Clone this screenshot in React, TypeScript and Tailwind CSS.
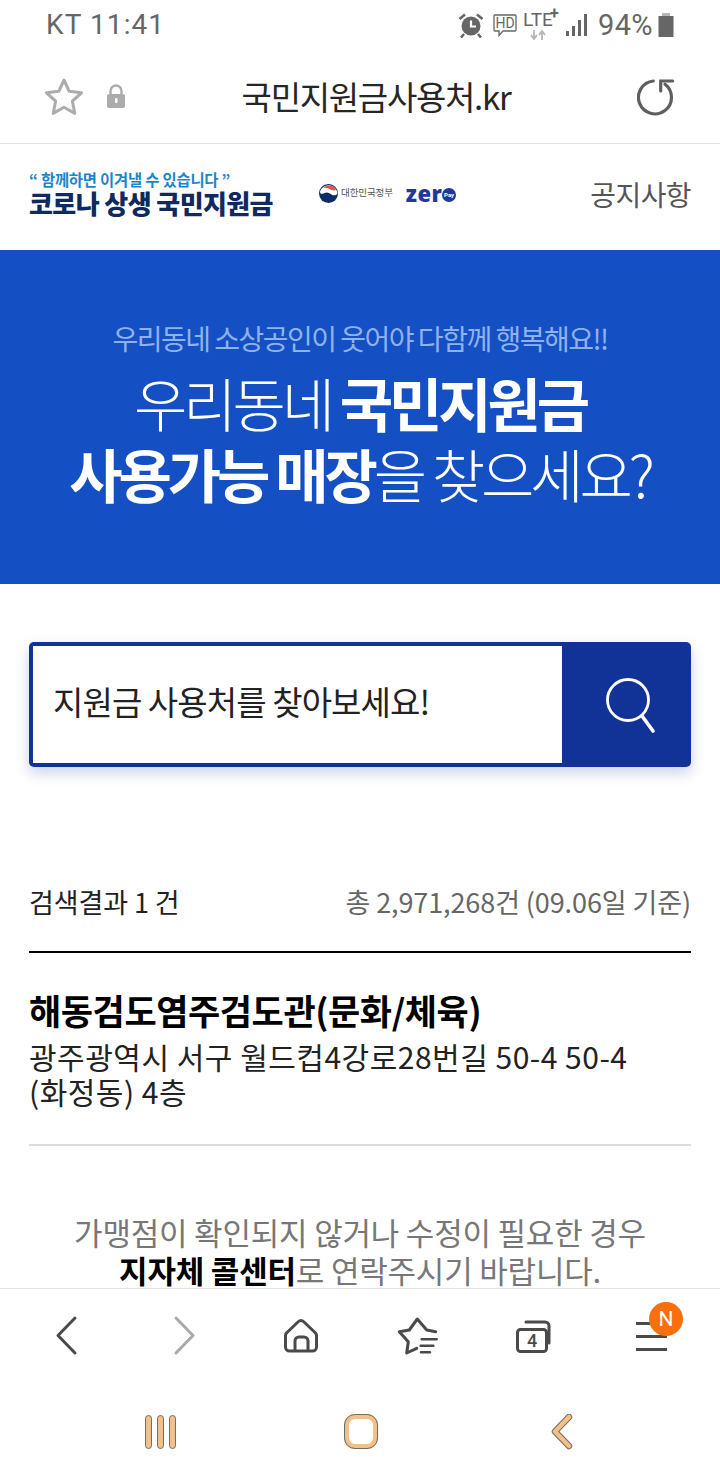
const font = { fontFamily: '"Noto Sans CJK KR", "Noto Sans", sans-serif' }
const roboto = { fontFamily: 'Roboto, sans-serif' }

function StatusBar() {
  return (
    <div className="h-[50px] flex items-center justify-between pl-[46px] pr-[45px] text-[#666666]">
      <span className="text-[28px] leading-none tracking-[1.1px]" style={roboto}>KT 11:41</span>
      <div className="flex items-center">
        <svg width="26" height="26" viewBox="0 0 26 26" className="mr-[8px]">
          <circle cx="13" cy="14" r="9.500" fill="#666666" />
          <path d="M13 8.500v6h5" stroke="#fff" strokeWidth="2.200" fill="none" />
          <path d="M1.500 7l5.500-4.500M24.500 7L19 2.500M6 22l-3 3.500M20 22l3 3.500" stroke="#666666" strokeWidth="2.600" fill="none" />
        </svg>
        <svg width="26" height="26" viewBox="0 0 26 26" className="mr-[4px]">
          <path d="M3 3h20a1 1 0 0 1 1 1v14a1 1 0 0 1-1 1H11l-4 4.500V19H3a1 1 0 0 1-1-1V4a1 1 0 0 1 1-1z" fill="none" stroke="#666666" strokeWidth="1.300" />
          <text x="13" y="16" textAnchor="middle" fontSize="14" fill="#666666" style={roboto}>HD</text>
        </svg>
        <div className="relative w-[40px] h-[30px] mr-[2px]">
          <span className="absolute left-[1px] top-[0px] text-[19px] leading-none" style={roboto}>LTE</span>
          <span className="absolute left-[28px] top-[-4px] text-[16px] leading-none font-bold" style={roboto}>+</span>
          <svg width="20" height="12" viewBox="0 0 20 12" className="absolute left-[7px] top-[19px]">
            <path d="M5 1v8M2 6l3 4 3-4" stroke="#b5b5b5" strokeWidth="1.800" fill="none" />
            <path d="M13 11V3M10 6l3-4 3 4" stroke="#b5b5b5" strokeWidth="1.800" fill="none" />
          </svg>
        </div>
        <svg width="24" height="24" viewBox="0 0 24 24" className="mr-[10px]">
          <path d="M2 18h3v5H2zM8 13h3v10H8zM14 7h3v16h-3zM20 1h3v22h-3z" fill="#666666" />
        </svg>
        <span className="text-[29px] leading-none tracking-[0.4px]" style={roboto}>94%</span>
        <svg width="18" height="26" viewBox="0 0 18 26" className="ml-[4px]">
          <path d="M5 1h8v3H5z" fill="#b8b8b8" />
          <path d="M1.500 4h15v21h-15z" fill="#666666" />
        </svg>
      </div>
    </div>
  )
}

function AddressBar() {
  return (
    <div className="h-[94px] flex items-center border-b border-[#e2e2e2] pl-[44px] pr-[45px]">
      <svg width="40" height="40" viewBox="0 0 40 40" className="shrink-0">
        <path d="M20 3l5.200 11.300 12.300 1.500-9.100 8.400 2.400 12.200L20 30.300 9.200 36.400l2.400-12.200-9.100-8.400 12.300-1.500z" fill="none" stroke="#acacac" strokeWidth="3" strokeLinejoin="round" />
      </svg>
      <svg width="22" height="28" viewBox="0 0 22 28" className="ml-[21px] shrink-0">
        <path d="M5.500 12V8a5.500 5.500 0 0 1 11 0v4" fill="none" stroke="#acacac" strokeWidth="2.400" />
        <rect x="2" y="11" width="18" height="14" rx="2" fill="#acacac" />
        <rect x="10" y="15" width="2.500" height="5" rx="1" fill="#fff" />
      </svg>
      <div className="flex-1 text-center text-[33px] leading-none tracking-[-1.3px] text-[#262626] pr-[12px]">국민지원금사용처.kr</div>
      <svg width="38" height="38" viewBox="0 0 38 38" className="shrink-0">
        <path d="M16.300 3A16.500 16.500 0 1 0 28 6.300" fill="none" stroke="#5f5f5f" strokeWidth="3.200" strokeLinecap="round" />
        <path d="M23.700 13V3h12" fill="none" stroke="#5f5f5f" strokeWidth="3.200" strokeLinecap="round" />
      </svg>
    </div>
  )
}

function SiteHeader() {
  return (
    <div className="h-[106px] flex items-center pl-[29px] pr-[29px]">
      <div className="w-[246px] shrink-0 -mt-[6px]">
        <div className="text-[15.4px] leading-[18px] font-bold text-[#1a86c9] whitespace-nowrap tracking-[-0.2px]">“ 함께하면 이겨낼 수 있습니다 ”</div>
        <div className="text-[26px] leading-[30px] font-black text-[#0f2a5f] tracking-[-0.6px] whitespace-nowrap">코로나 상생 국민지원금</div>
      </div>
      <div className="flex items-center ml-[44px] -mt-[8px]">
        <svg width="19" height="19" viewBox="0 0 19 19">
          <circle cx="9.500" cy="9.500" r="9.500" fill="#0b2a68" />
          <path d="M1 7.500A9 9 0 0 1 18.500 9c-.5 2.500-4 3-6 1.500s-4-3-7-1.500-4.500 1-4.500-1.500z" fill="#fff" />
          <path d="M4 4a8 8 0 0 1 13 2c-2 1-5 0-6.500-1S6 3.500 4 4z" fill="#d9534f" />
        </svg>
        <span className="text-[9.500px] leading-none text-[#555555] ml-[3px] tracking-[-0.1px] whitespace-nowrap">대한민국정부</span>
        <span className="text-[22px] leading-none font-black text-[#23399a] ml-[13px] tracking-[0.4px]" style={{ fontFamily: '"Open Sans", sans-serif' }}>zer</span>
        <span className="w-[14px] h-[14px] rounded-full bg-[#23399a] text-white text-[6px] leading-[14px] text-center font-bold mt-[3px] ml-[0px]" style={roboto}>Pay</span>
      </div>
      <div className="ml-auto text-[28px] leading-none tracking-[-0.6px] text-[#555555] -mt-[6px] whitespace-nowrap">공지사항</div>
    </div>
  )
}

function Hero() {
  return (
    <div className="h-[334px] bg-[#1450c4] flex flex-col items-center pt-[70px]">
      <p className="text-[28px] leading-[36px] tracking-[-1.5px] text-[#8fb2ee] whitespace-nowrap">우리동네 소상공인이 웃어야 다함께 행복해요!!</p>
      <h1 className="mt-[11px] text-[58px] leading-[71px] tracking-[-4.100px] text-white font-light text-center whitespace-nowrap">
        우리동네 <b className="font-bold">국민지원금</b>
        <br />
        <b className="font-bold">사용가능 매장</b>을 찾으세요?
      </h1>
    </div>
  )
}

function SearchBox() {
  return (
    <div className="mt-[58px] mx-[29px] h-[125px] flex rounded-[5px] bg-[#113397] p-[4px] shadow-[0_6px_14px_rgba(20,50,130,0.22)]">
      <div className="w-[529px] bg-white flex items-center pl-[20px] text-[33px] tracking-[-0.9px] text-[#222222] pb-[6px]">지원금 사용처를 찾아보세요!</div>
      <div className="flex-1 flex items-center justify-center">
        <svg width="54" height="60" viewBox="0 0 54 60" className="ml-[12px]">
          <circle cx="24" cy="25" r="20.500" fill="none" stroke="#fff" strokeWidth="2.800" />
          <path d="M38 41l11 15" stroke="#fff" strokeWidth="3.600" strokeLinecap="round" />
        </svg>
      </div>
    </div>
  )
}

function Results() {
  return (
    <div className="mx-[29px] mt-[115px]">
      <div className="flex items-center justify-between h-[40px]">
        <span className="text-[27px] tracking-[-0.1px] text-[#222222]">검색결과 1 건</span>
        <span className="text-[27px] tracking-[-0.1px] text-[#666666]">총 2,971,268건 (09.06일 기준)</span>
      </div>
      <div className="mt-[29px] border-t-2 border-black pt-[35px] pb-[35px]">
        <h2 className="text-[35px] leading-[44px] font-bold tracking-[-0.4px] text-black">해동검도염주검도관(문화/체육)</h2>
        <p className="text-[30px] leading-[35px] tracking-[0.5px] text-[#222222] mt-[7px]">
          광주광역시 서구 월드컵4강로28번길 50-4 50-4
          <br />
          (화정동) 4층
        </p>
      </div>
      <div className="border-t-2 border-[#dddddd]" />
      <p className="mt-[67px] text-center text-[31px] leading-[38px] tracking-[-0.2px] text-[#777777]">
        가맹점이 확인되지 않거나 수정이 필요한 경우
        <br />
        <b className="font-bold text-black">지자체 콜센터</b>로 연락주시기 바랍니다.
      </p>
    </div>
  )
}

function BrowserNav() {
  return (
    <div className="h-[108px] shrink-0 bg-white border-t border-[#e4e4e4] relative z-10 flex items-start pl-[50px] pt-[26px]">
      <svg width="32" height="42" viewBox="0 0 32 42">
        <path d="M25 3L8 20.500 25 38" fill="none" stroke="#4a4a4a" strokeWidth="3" strokeLinecap="round" strokeLinejoin="round" />
      </svg>
      <svg width="32" height="42" viewBox="0 0 32 42" className="ml-[87px]">
        <path d="M7 3l17 17.500L7 38" fill="none" stroke="#aaaaaa" strokeWidth="3" strokeLinecap="round" strokeLinejoin="round" />
      </svg>
      <svg width="40" height="42" viewBox="0 0 40 42" className="ml-[79px]">
        <path d="M18.500 6.500a3.500 3.500 0 0 1 5 0L35 17.500a4 4 0 0 1 1.500 3V32a4 4 0 0 1-4 4H9.500a4 4 0 0 1-4-4V20.500a4 4 0 0 1 1.500-3z" fill="none" stroke="#4a4a4a" strokeWidth="3" strokeLinejoin="round" />
        <path d="M15 36V26a4 4 0 0 1 4-4h5a4 4 0 0 1 4 4v10" fill="none" stroke="#4a4a4a" strokeWidth="3" />
      </svg>
      <svg width="44" height="42" viewBox="0 0 44 42" className="ml-[76px]">
        <path d="M39.700 16.700L30.700 15 21.300 4 13.300 15 3.300 16.700l9 10-1.600 11.300 10-4.700" fill="none" stroke="#4a4a4a" strokeWidth="3" strokeLinecap="round" strokeLinejoin="round" />
        <path d="M25.700 24.300h15M24.700 30.700h12.600M25 37.300h9" fill="none" stroke="#4a4a4a" strokeWidth="2.600" strokeLinecap="round" />
      </svg>
      <div className="relative w-[40px] h-[42px] ml-[73px]">
        <svg width="40" height="42" viewBox="0 0 40 42" className="absolute inset-0">
          <rect x="4.500" y="14.500" width="29" height="22" rx="3" fill="none" stroke="#4a4a4a" strokeWidth="3" />
          <path d="M13 7h19a4 4 0 0 1 4 4v17" fill="none" stroke="#4a4a4a" strokeWidth="3" strokeLinecap="round" />
        </svg>
        <span className="absolute left-[4px] w-[30px] top-[15px] text-center text-[18px] leading-[22px] font-medium text-[#4a4a4a]" style={roboto}>4</span>
      </div>
      <div className="relative w-[32px] h-[42px] ml-[83px] mt-[7px]">
        <div className="h-[3px] bg-[#4a4a4a] mb-[10px] w-[31px]" />
        <div className="h-[3px] bg-[#4a4a4a] mb-[10px] w-[31px]" />
        <div className="h-[3px] bg-[#4a4a4a] w-[31px]" />
        <span className="absolute left-[13px] top-[-20px] w-[34px] h-[34px] rounded-full bg-[#f96f0e] text-white text-[21px] leading-[34px] text-center" style={roboto}>N</span>
      </div>
    </div>
  )
}

function SystemNav() {
  return (
    <div className="h-[84px] shrink-0 bg-white flex items-start pt-[18px]">
      <div className="flex gap-[5px] ml-[145px] mt-[1px]">
        <div className="w-[7px] h-[34px] rounded-full bg-[#f2c08a] border border-[#7a6a58]" />
        <div className="w-[7px] h-[34px] rounded-full bg-[#f2c08a] border border-[#7a6a58]" />
        <div className="w-[7px] h-[34px] rounded-full bg-[#f2c08a] border border-[#7a6a58]" />
      </div>
      <div className="ml-[168px] w-[34px] h-[35px] rounded-[11px] border-[5px] border-[#f2c08a] outline outline-1 -outline-offset-1 outline-[#7a6a58]" />
      <svg width="24" height="36" viewBox="0 0 24 36" className="ml-[172px]">
        <path d="M19 3L5 17.500 19 32" fill="none" stroke="#7a6a58" strokeWidth="6.500" strokeLinecap="round" strokeLinejoin="round" />
        <path d="M19 3L5 17.500 19 32" fill="none" stroke="#f2c08a" strokeWidth="4.500" strokeLinecap="round" strokeLinejoin="round" />
      </svg>
    </div>
  )
}

export default function App() {
  return (
    <div className="w-[720px] h-[1480px] bg-white flex flex-col overflow-hidden" style={font}>
      <div className="flex-1 overflow-hidden">
        <StatusBar />
        <AddressBar />
        <SiteHeader />
        <Hero />
        <SearchBox />
        <Results />
      </div>
      <BrowserNav />
      <SystemNav />
    </div>
  )
}
